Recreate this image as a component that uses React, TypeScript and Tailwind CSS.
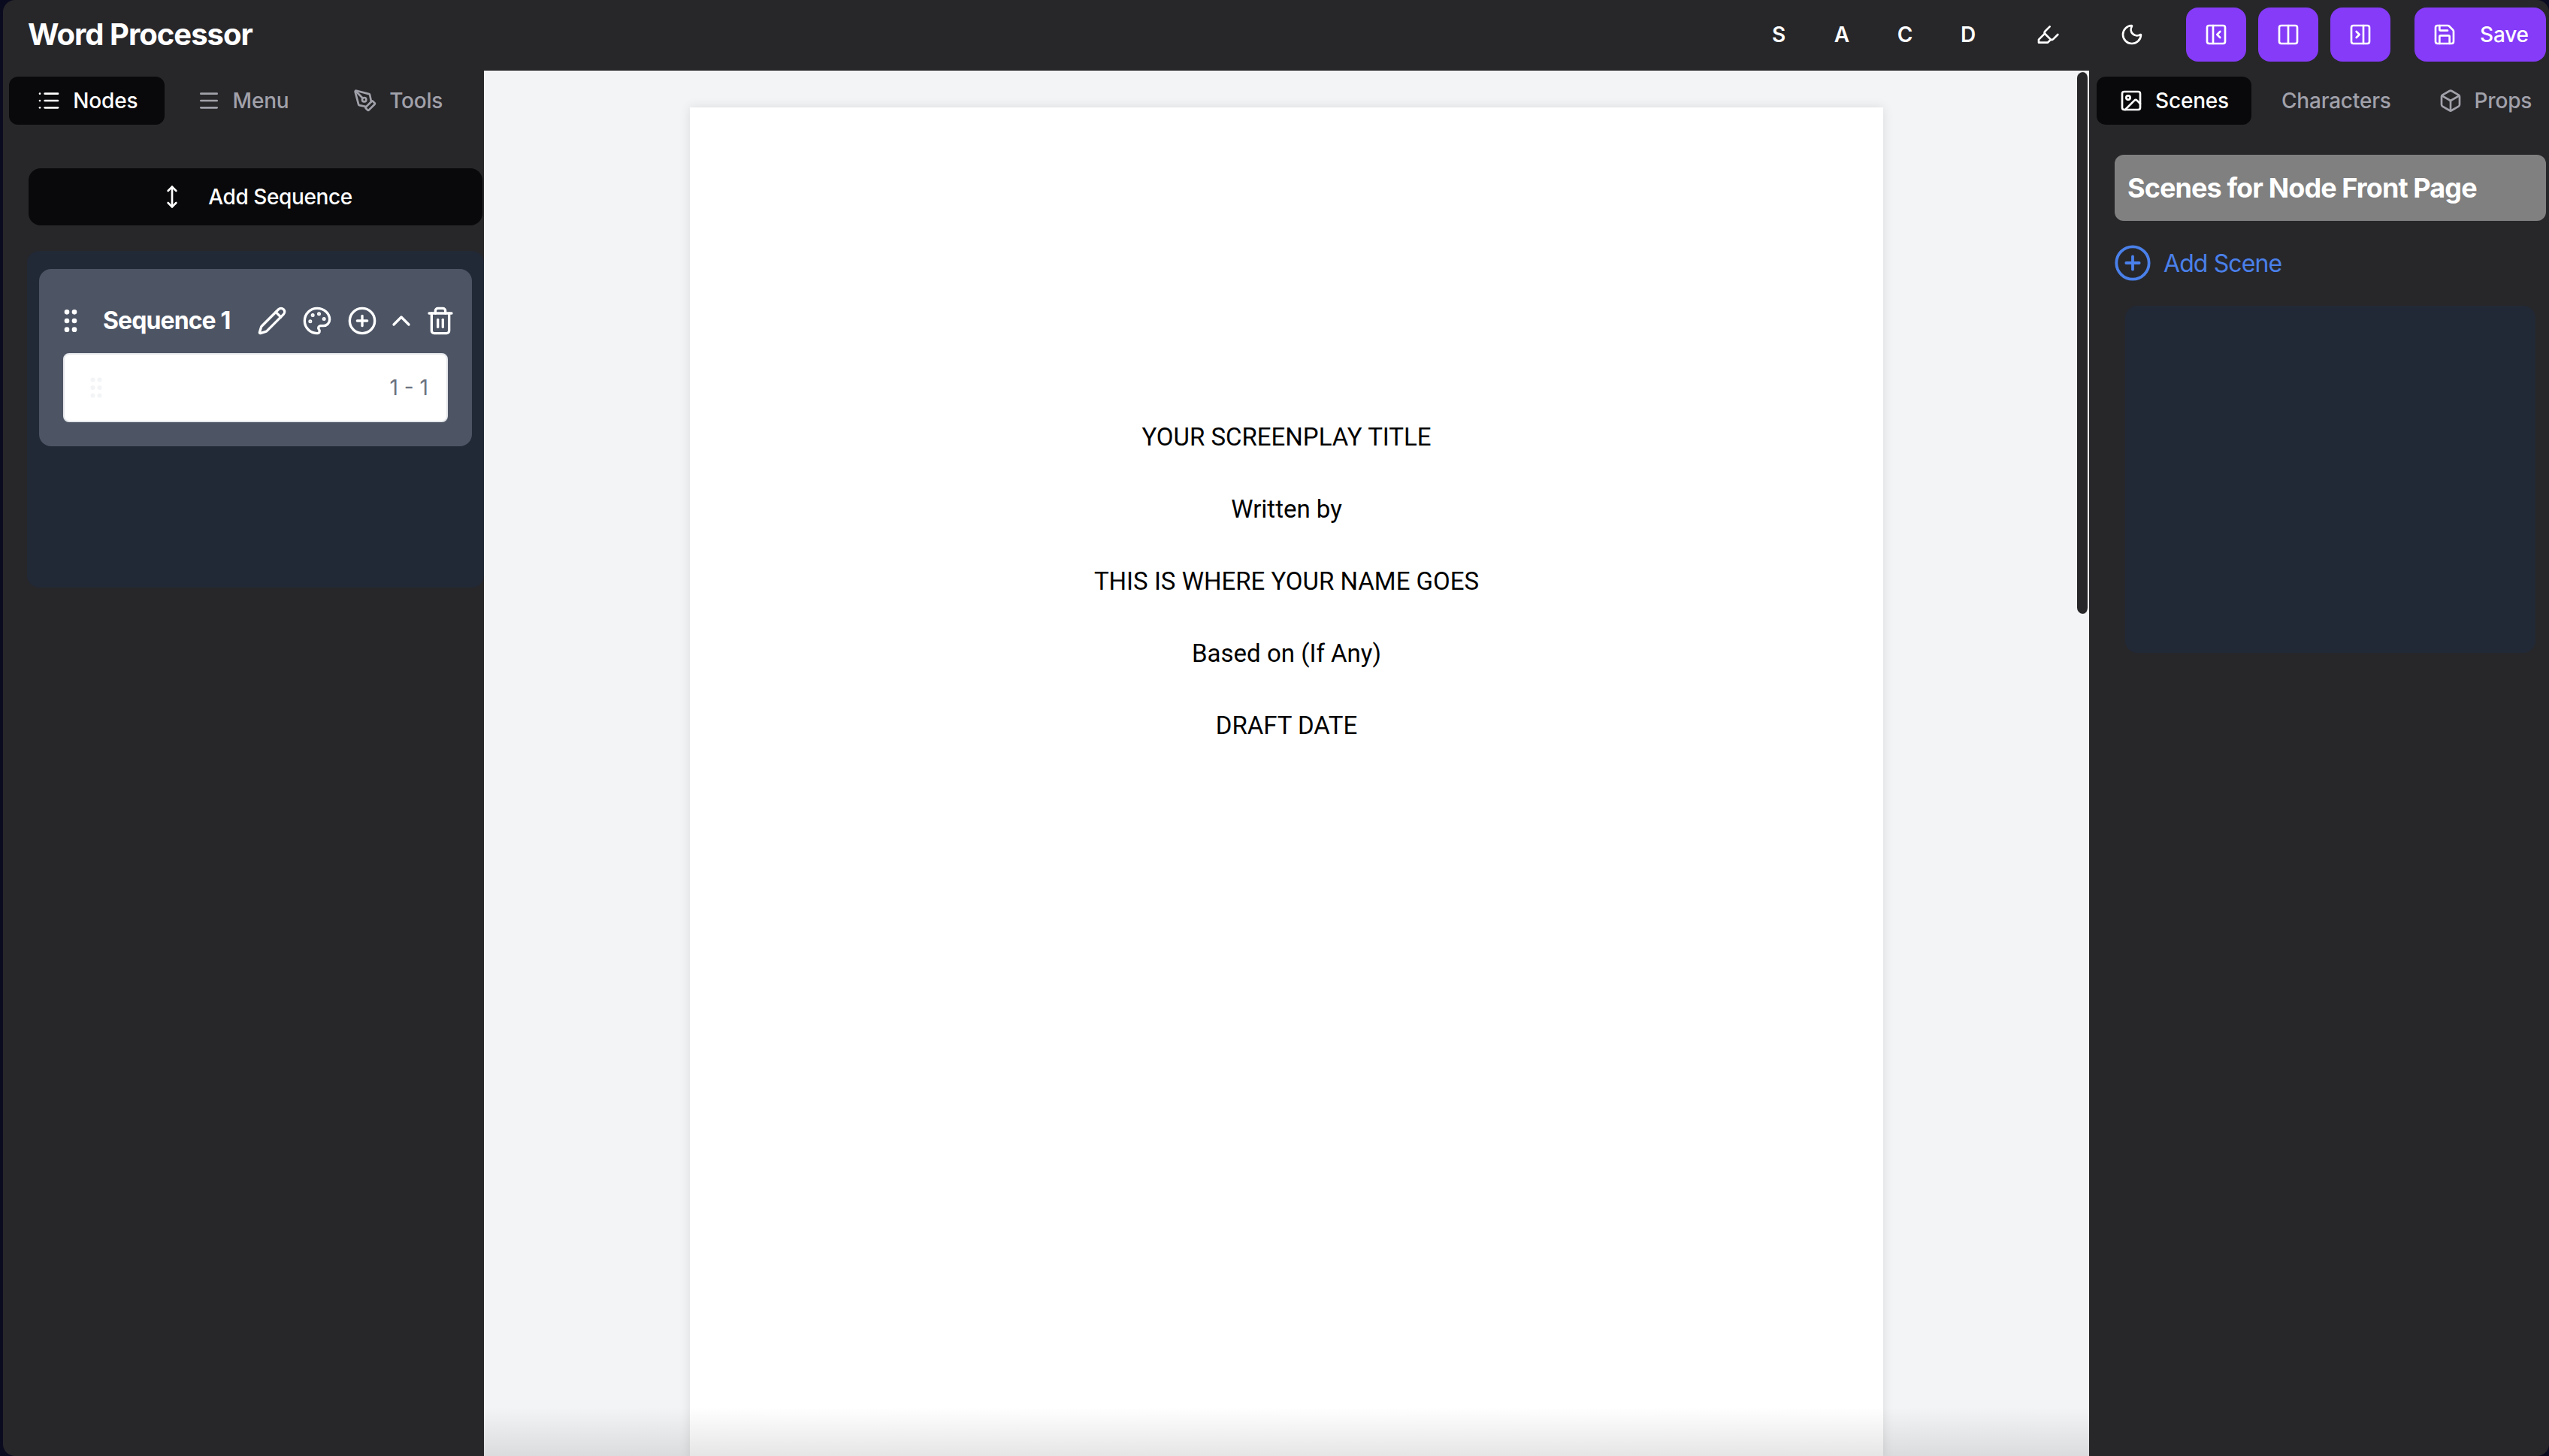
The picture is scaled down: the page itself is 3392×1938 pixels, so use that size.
import {
  Box,
  ChevronUp,
  CirclePlus,
  Columns2,
  GripVertical,
  Highlighter,
  Image,
  List,
  Menu,
  Moon,
  MoveVertical,
  PanelLeftClose,
  PanelRightClose,
  Palette,
  Pencil,
  PenTool,
  Save,
  Trash2,
} from "lucide-react";

const titleLines = [
  "YOUR SCREENPLAY TITLE",
  "Written by",
  "THIS IS WHERE YOUR NAME GOES",
  "Based on (If Any)",
  "DRAFT DATE",
];

function Header() {
  return (
    <header className="flex h-[94px] shrink-0 items-center justify-between pb-[2px] pl-[33px] pr-[4px]">
      <h1 className="text-[40px] font-bold tracking-tight text-white">Word Processor</h1>
      <div className="flex items-center">
        {["S", "A", "C", "D"].map((l) => (
          <button key={l} className="flex h-[72px] w-[84px] items-center justify-center pl-[2px] text-[28px] font-semibold text-white">
            {l}
          </button>
        ))}
        <button className="ml-[25px] flex h-[72px] w-[80px] items-center justify-center text-white">
          <Highlighter size={32} />
        </button>
        <button className="ml-[32px] flex h-[72px] w-[80px] items-center justify-center text-white">
          <Moon size={32} />
        </button>
        <div className="ml-[32px] flex gap-4">
          <button className="flex h-[72px] w-[80px] items-center justify-center rounded-2xl bg-[#853bf7] text-white">
            <PanelLeftClose size={32} />
          </button>
          <button className="flex h-[72px] w-[80px] items-center justify-center rounded-2xl bg-[#853bf7] text-white">
            <Columns2 size={32} />
          </button>
          <button className="flex h-[72px] w-[80px] items-center justify-center rounded-2xl bg-[#853bf7] text-white">
            <PanelRightClose size={32} />
          </button>
        </div>
        <button className="ml-[32px] flex h-[72px] w-[175px] items-center gap-[31px] rounded-2xl bg-[#853bf7] pl-[24px] text-[28px] font-medium tracking-[-0.2px] text-white">
          <Save size={32} />
          Save
        </button>
      </div>
    </header>
  );
}

function LeftPanel() {
  return (
    <aside className="flex w-[640px] shrink-0 flex-col">
      <div className="ml-[8px] mt-[8px] grid h-[64px] w-[620px] grid-cols-3 self-start text-[28px] font-medium tracking-[-0.2px]">
        <button className="flex items-center justify-center gap-4 rounded-xl bg-[#09090b] pl-[2px] text-white">
          <List size={32} />
          Nodes
        </button>
        <button className="flex items-center justify-center gap-4 pl-[2px] text-[#a1a1aa]">
          <Menu size={32} />
          Menu
        </button>
        <button className="flex items-center justify-center gap-4 pl-[2px] text-[#a1a1aa]">
          <PenTool size={32} />
          Tools
        </button>
      </div>
      <button className="ml-[34px] mt-[58px] flex h-[76px] w-[604px] items-center justify-center gap-[32px] rounded-2xl bg-[#09090b] pl-[2px] text-[28px] font-medium tracking-[-0.4px] text-white">
        <MoveVertical size={32} />
        Add Sequence
      </button>
      <div className="ml-[32px] mt-[34px] h-[448px] rounded-2xl bg-[#222936] pl-[16px] pt-[24px]">
        <div className="h-[236px] w-[576px] rounded-2xl bg-[#4d5565] pt-[49px]">
          <div className="flex h-[40px] items-center px-[22px] text-white">
            <GripVertical size={40} />
            <span className="ml-[23px] flex-1 text-[32px] font-bold tracking-[-0.9px]">Sequence 1</span>
            <div className="flex items-center gap-3">
              <div className="flex items-center gap-5">
                <Pencil size={40} />
                <Palette size={40} />
                <CirclePlus size={40} />
              </div>
              <ChevronUp size={40} />
              <Trash2 size={40} />
            </div>
          </div>
          <div className="mx-[32px] mt-[23px] flex h-[92px] items-center justify-between rounded-lg border-2 border-[#e5e7eb] bg-white pl-[24px] pr-[24px]">
            <GripVertical size={36} className="text-[#f3f4f6]" />
            <span className="text-[28px] text-[#6b7280]">1 - 1</span>
          </div>
        </div>
      </div>
    </aside>
  );
}

function Editor() {
  return (
    <main className="relative flex-1 overflow-hidden bg-[#f3f4f6]">
      <div className="mx-auto mt-[49px] h-[1800px] w-[1588px] bg-white pt-[415px] shadow-[0_0_14px_rgba(0,0,0,0.1)]">
        <div className="flex flex-col gap-12 text-center font-['Roboto',sans-serif] text-[33px] leading-[48px] text-black">
          {titleLines.map((t) => (
            <p key={t}>{t}</p>
          ))}
        </div>
      </div>
      {/* scrollbar thumb */}
      <div className="absolute right-0 top-[2px] h-[721px] w-[16px] rounded-b-full rounded-t-full border-r-2 border-white bg-[#27272a]" />
      <div className="pointer-events-none absolute inset-x-0 bottom-0 h-[65px] bg-gradient-to-t from-black/10 to-transparent" />
    </main>
  );
}

function RightPanel() {
  return (
    <aside className="flex w-[612px] shrink-0 flex-col">
      <div className="ml-[10px] mt-[8px] flex h-[64px] text-[28px] font-medium tracking-[-0.2px]">
        <button className="flex w-[208px] items-center justify-center gap-4 rounded-xl bg-[#09090b] text-white">
          <Image size={32} />
          Scenes
        </button>
        <button className="flex w-[228px] items-center justify-center text-[#a1a1aa]">Characters</button>
        <button className="flex w-[172px] items-center justify-center gap-4 text-[#a1a1aa]">
          <Box size={32} />
          Props
        </button>
      </div>
      <div className="ml-[34px] mt-[40px] flex h-[88px] w-[574px] items-center rounded-xl bg-[#808080] pl-[17px] text-[36px] font-bold tracking-[-0.9px] text-white">
        Scenes for Node Front Page
      </div>
      <button className="ml-[32px] mt-[30px] flex h-[52px] items-center gap-[15px] text-[32px] tracking-[-0.9px] text-[#4a80ea]">
        <CirclePlus size={52} strokeWidth={1.75} />
        <span className="pt-[2px]">Add Scene</span>
      </button>
      <div className="ml-[48px] mt-[31px] h-[462px] w-[546px] rounded-2xl bg-[#222936]" />
    </aside>
  );
}

export default function App() {
  return (
    <div className="h-screen overflow-hidden bg-[#0b0b20] pl-[4px] font-['Inter',sans-serif]">
      <div className="flex h-full flex-col overflow-hidden rounded-2xl bg-[#27272a]">
        <Header />
        <div className="flex min-h-0 flex-1">
          <LeftPanel />
          <Editor />
          <RightPanel />
        </div>
      </div>
    </div>
  );
}
